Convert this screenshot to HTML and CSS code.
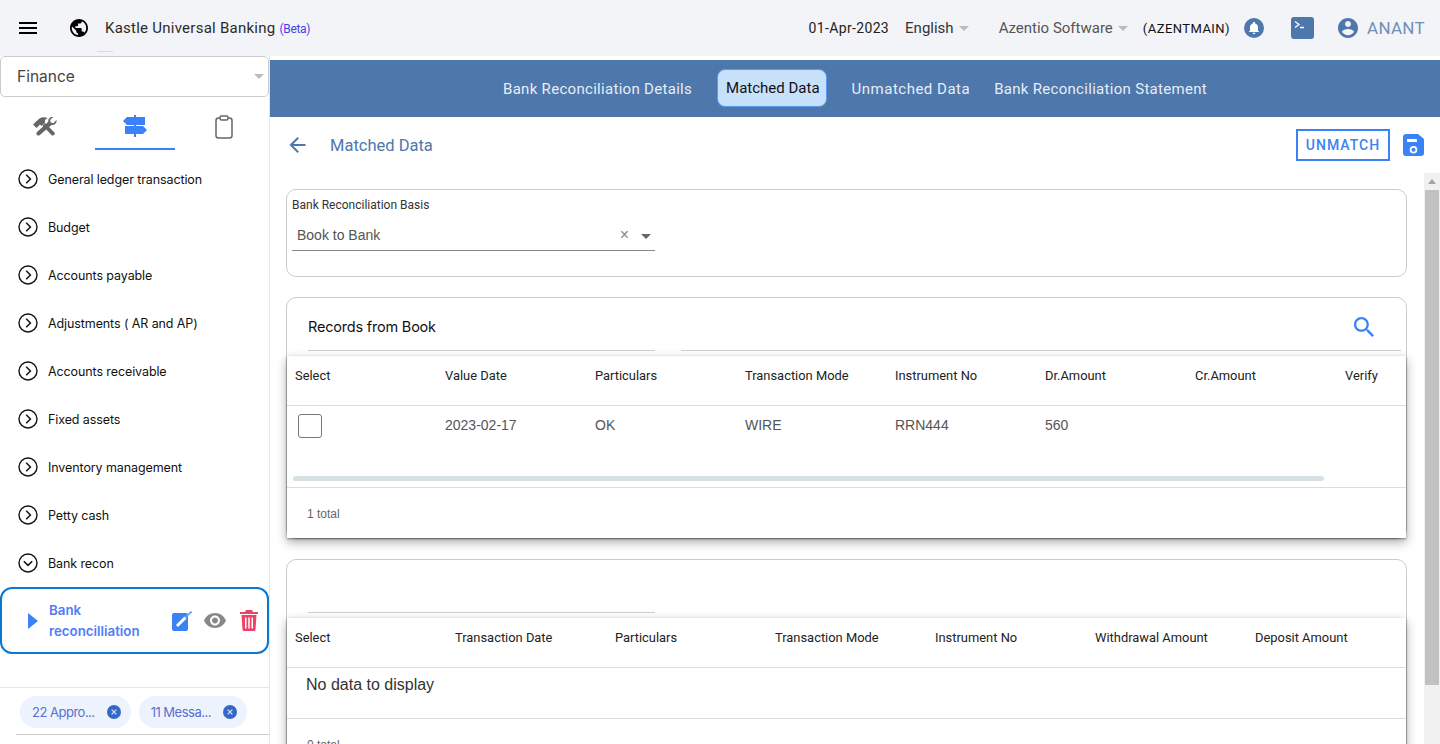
FILE: index.html
```html
<!DOCTYPE html>
<html lang="en">
<head>
  <meta charset="UTF-8" />
  <title>Kastle Universal Banking</title>
  <link rel="stylesheet" href="styles.css">
</head>
<body>

  <svg class="defs" width="0" height="0">
    <symbol id="cancel" viewBox="0 0 24 24"><circle cx="12" cy="12" r="12"/><path d="M8 8l8 8M16 8l-8 8" stroke="#fff" stroke-width="2.200" opacity="0.800"/></symbol>
    <symbol id="chevRight" viewBox="0 0 20 20"><circle cx="10" cy="10" r="9" fill="none" stroke="currentColor" stroke-width="1.400"/><path d="M8.200 5.800l4.200 4.200-4.200 4.200" fill="none" stroke="currentColor" stroke-width="1.500"/></symbol>
    <symbol id="chevDown" viewBox="0 0 20 20"><circle cx="10" cy="10" r="9" fill="none" stroke="currentColor" stroke-width="1.400"/><path d="M5.800 8.200l4.200 4.200 4.200-4.200" fill="none" stroke="currentColor" stroke-width="1.500"/></symbol>
  </svg>

  <header class="topbar">
    <svg class="ic-menu" viewBox="0 0 18 12"><path d="M0 0h18v2H0zM0 5h18v2H0zM0 10h18v2H0z"/></svg>
    <svg class="ic-globe" viewBox="2 2 20 20"><path d="M12 2C6.480 2 2 6.480 2 12s4.480 10 10 10 10-4.480 10-10S17.520 2 12 2zm-1 17.930c-3.950-.49-7-3.850-7-7.930 0-.62.08-1.210.21-1.790L9 15v1c0 1.100.9 2 2 2v1.930zm6.900-2.540c-.26-.81-1-1.390-1.900-1.390h-1v-3c0-.55-.45-1-1-1H8v-2h2c.55 0 1-.45 1-1V7h2c1.100 0 2-.9 2-2v-.41c2.930 1.190 5 4.060 5 7.410 0 2.080-.8 3.970-2.100 5.390z"/></svg>
    <div class="brand">Kastle Universal Banking <small>(Beta)</small></div>
    <div class="top-right">
      <span class="date">01-Apr-2023</span>
      <span class="drop lang">English<i class="caret"></i></span>
      <span class="drop org">Azentio Software<i class="caret"></i></span>
      <span class="code">(AZENTMAIN)</span>
      <svg class="ic-bell" viewBox="0 0 20 20"><circle cx="10" cy="10" r="10" fill="#4e77ab"/><path fill="#fff" d="M10 16c.8 0 1.400-.6 1.400-1.300H8.600c0 .7.6 1.300 1.400 1.300zm4-3.600V9.300c0-1.900-1-3.500-2.900-3.900V5c0-.6-.5-1-1.100-1s-1.100.4-1.100 1v.4C7 5.800 6 7.400 6 9.300v3.100L5 13.500v.4h10v-.4z"/></svg>
      <svg class="ic-term" viewBox="0 0 23 22"><rect width="23" height="22" rx="3" fill="#4e77ab"/><path d="M4 4.500l4 3-4 3M9 10.500h4" fill="none" stroke="#fff" stroke-width="1.300"/></svg>
      <svg class="ic-user" viewBox="2 2 20 20"><path d="M12 2C6.480 2 2 6.480 2 12s4.480 10 10 10 10-4.480 10-10S17.520 2 12 2zm0 3c1.660 0 3 1.340 3 3s-1.340 3-3 3-3-1.340-3-3 1.340-3 3-3zm0 14.200c-2.500 0-4.710-1.280-6-3.220.03-1.990 4-3.080 6-3.080 1.990 0 5.970 1.090 6 3.080-1.290 1.940-3.500 3.220-6 3.220z"/></svg>
      <span class="user">ANANT</span>
    </div>
  </header>

  <div class="page">
    <aside class="sidebar">
      <div class="module-select">Finance<i class="caret"></i></div>
      <div class="side-tabs">
        <div class="side-tab first">
          <svg class="ic-tools" viewBox="0 0 24 19"><path d="M0 7.500L6.500 1.500C9 0 12 0 14.500 1L12 3v2.500L8.500 9 7 7.500 3.500 11z"/><path d="M9.500 8.500l2.500-2.500 9.500 9.500c1.200 1.800-1 3.800-2.800 2.800z"/><path d="M23.500 3l-3.200 3.200-2.600-.6-.6-2.500L20.300 0c-3-.7-5.600 1.800-5 4.800L4 15c-1.900 2 .8 4.900 2.900 3L18.500 8c3 .7 5.800-2 5-5z"/></svg>
        </div>
        <div class="side-tab active">
          <svg class="ic-signs" viewBox="0 0 24 22"><path d="M11 0h2v2h9v8H4L0 6l4-4h7z"/><path d="M11 10h2v1h7l4 4-4 4h-7v3h-2v-3H2v-8h9z"/></svg>
        </div>
        <div class="side-tab">
          <svg class="ic-clip" viewBox="0 0 18 24"><rect x="1" y="3" width="16" height="20" rx="2.500" fill="none" stroke="currentColor" stroke-width="1.500"/><rect x="5" y="1" width="8" height="4" rx="1.500" fill="#fff" stroke="currentColor" stroke-width="1.500"/></svg>
        </div>
      </div>

      <ul class="tree">
        <li><svg><use href="#chevRight"/></svg>General ledger transaction</li>
        <li><svg><use href="#chevRight"/></svg>Budget</li>
        <li><svg><use href="#chevRight"/></svg>Accounts payable</li>
        <li><svg><use href="#chevRight"/></svg>Adjustments ( AR and AP)</li>
        <li><svg><use href="#chevRight"/></svg>Accounts receivable</li>
        <li><svg><use href="#chevRight"/></svg>Fixed assets</li>
        <li><svg><use href="#chevRight"/></svg>Inventory management</li>
        <li><svg><use href="#chevRight"/></svg>Petty cash</li>
        <li><svg><use href="#chevDown"/></svg>Bank recon</li>
      </ul>

      <div class="tree-active">
        <i class="play"></i>
        <span class="tree-active-name">Bank reconcilliation</span>
        <svg class="ic-edit" viewBox="0 0 20 20"><rect y="2" width="16" height="18" rx="2" fill="#3b82f6"/><path d="M5 15l8.500-8.500" stroke="#fff" stroke-width="3" fill="none"/><path d="M14 6l5.500-5.500" stroke="#6ea4f8" stroke-width="1.800" fill="none"/></svg>
        <svg class="ic-eye" viewBox="1 4.500 22 15"><path d="M12 4.500C7 4.500 2.730 7.610 1 12c1.730 4.390 6 7.500 11 7.500s9.270-3.110 11-7.500c-1.730-4.390-6-7.500-11-7.500zM12 17c-2.760 0-5-2.240-5-5s2.240-5 5-5 5 2.240 5 5-2.240 5-5 5zm0-8c-1.660 0-3 1.340-3 3s1.340 3 3 3 3-1.340 3-3-1.340-3-3-3z"/></svg>
        <svg class="ic-trash" viewBox="0 0 18 21"><path d="M6 0h6l1 2h5v2H0V2h5zM1.500 5h15l-1 14.500A1.500 1.500 0 0 1 14 21H4a1.500 1.500 0 0 1-1.500-1.500zM5 7.500V18.500h1.500V7.500zm3.250 0V18.500h1.500V7.500zm3.250 0V18.500H13V7.500z" fill-rule="evenodd"/></svg>
      </div>

      <div class="side-foot">
        <span class="chip">22 Appro...<svg><use href="#cancel"/></svg></span>
        <span class="chip">11 Messa...<svg><use href="#cancel"/></svg></span>
      </div>
    </aside>

    <main class="main">
      <nav class="tabs">
        <a class="tab">Bank Reconciliation Details</a>
        <a class="tab selected">Matched Data</a>
        <a class="tab">Unmatched Data</a>
        <a class="tab">Bank Reconciliation Statement</a>
      </nav>

      <div class="title-row">
        <svg class="ic-back" viewBox="4 4 16 16"><path d="M20 11H7.830l5.590-5.590L12 4l-8 8 8 8 1.410-1.410L7.830 13H20v-2z"/></svg>
        <h1>Matched Data</h1>
        <button class="btn-outline">UNMATCH</button>
        <svg class="ic-save" viewBox="0 0 21 22"><path fill-rule="evenodd" d="M3 0h12l6 5v14a3 3 0 0 1-3 3H3a3 3 0 0 1-3-3V3a3 3 0 0 1 3-3zm1 5v3h10V5zm6.500 7a3.800 3.800 0 1 0 0 7.600 3.800 3.800 0 0 0 0-7.600zm0 1.800a2 2 0 1 1 0 4 2 2 0 0 1 0-4z"/></svg>
      </div>

      <div class="scroll-wrap">
        <div class="content">
          <section class="card card-basis">
            <label>Bank Reconciliation Basis</label>
            <div class="field">
              <span>Book to Bank</span>
              <em>&times;</em>
              <i class="caret dark"></i>
            </div>
          </section>

          <section class="card card-table">
            <div class="card-head">
              <h2>Records from Book</h2>
              <div class="search-line">
                <svg class="ic-search" viewBox="3 3 17.500 17.500"><path d="M15.500 14h-.79l-.28-.27C15.410 12.590 16 11.110 16 9.500 16 5.910 13.090 3 9.500 3S3 5.910 3 9.500 5.910 16 9.500 16c1.610 0 3.090-.59 4.230-1.570l.27.28v.79l5 4.990L20.490 19l-4.990-5zm-6 0C7.010 14 5 11.990 5 9.500S7.010 5 9.500 5 14 7.010 14 9.500 11.990 14 9.500 14z"/></svg>
              </div>
            </div>
            <div class="paper">
              <table class="cols-150">
                <thead>
                  <tr><th>Select</th><th>Value Date</th><th>Particulars</th><th>Transaction Mode</th><th>Instrument No</th><th>Dr.Amount</th><th>Cr.Amount</th><th>Verify</th></tr>
                </thead>
                <tbody>
                  <tr><td><span class="check"></span></td><td>2023-02-17</td><td>OK</td><td>WIRE</td><td>RRN444</td><td>560</td><td></td><td></td></tr>
                </tbody>
              </table>
              <div class="hscroll"><div></div></div>
              <div class="total">1 total</div>
            </div>
          </section>

          <section class="card card-table second">
            <div class="card-head">
              <h2>&nbsp;</h2>
            </div>
            <div class="paper">
              <table class="cols-160">
                <thead>
                  <tr><th>Select</th><th>Transaction Date</th><th>Particulars</th><th>Transaction Mode</th><th>Instrument No</th><th>Withdrawal Amount</th><th>Deposit Amount</th></tr>
                </thead>
              </table>
              <div class="no-data">No data to display</div>
              <div class="total">0 total</div>
            </div>
          </section>
        </div>

        <div class="vscroll">
          <i class="arrow-up"></i>
          <div class="thumb"></div>
        </div>
      </div>
    </main>
  </div>

</body>
</html>
```

FILE: styles.css
```css
html, body {
  margin: 0;
  padding: 0;
  height: 744px;
  overflow: hidden;
}
body {
  font-family: Roboto, Arial, sans-serif;
  background-color: #fff;
  color: #222;
}
.defs {
  position: absolute;
}
.caret {
  display: inline-block;
  width: 0;
  height: 0;
  border-left: 5px solid transparent;
  border-right: 5px solid transparent;
  border-top: 5px solid #bbb;
}

/* top bar */
.topbar {
  height: 56px;
  background-color: #f3f4f8;
  display: flex;
  align-items: center;
  padding-left: 19px;
  position: relative;
}
.topbar::after {
  content: "";
  position: absolute;
  left: 97px;
  top: 51px;
  width: 16px;
  height: 1px;
  background-color: #ddd;
}
.ic-menu {
  width: 18px;
  height: 12px;
  margin-right: 33px;
}
.ic-globe {
  width: 18px;
  height: 18px;
  margin-right: 17px;
}
.brand {
  font-size: 15px;
  letter-spacing: 0.25px;
  color: #2b2b2b;
}
.brand small {
  font-size: 12px;
  letter-spacing: -0.3px;
  color: #3f3ff0;
}
.top-right {
  margin-left: auto;
  display: flex;
  align-items: center;
  font-size: 14px;
}
.date {
  color: #222;
  letter-spacing: 0.35px;
  margin-right: 16px;
}
.drop {
  color: #555;
  font-size: 15px;
}
.drop .caret {
  margin-left: 5px;
  vertical-align: 2px;
}
.lang {
  color: #333;
  margin-right: 30px;
}
.org {
  margin-right: 15px;
}
.code {
  font-size: 13px;
  letter-spacing: 0.45px;
  color: #111;
  margin-right: 14px;
}
.ic-bell {
  width: 20px;
  height: 20px;
  margin-right: 27px;
}
.ic-term {
  width: 23px;
  height: 22px;
  margin-right: 24px;
}
.ic-user {
  width: 20px;
  height: 20px;
  fill: #4e77ab;
  margin-right: 9px;
}
.user {
  font-size: 17px;
  letter-spacing: 0.3px;
  color: #6f8fb8;
  margin-right: 15px;
}

.page {
  display: flex;
  height: 688px;
}

/* sidebar */
.sidebar {
  width: 269px;
  flex: none;
  border-right: 1px solid #e6e6e6;
  display: flex;
  flex-direction: column;
  font-family: Inter, Arial, sans-serif;
}
.module-select {
  height: 39px;
  border: 1px solid #ccc;
  border-radius: 5px;
  padding-left: 16px;
  display: flex;
  align-items: center;
  justify-content: space-between;
  font-size: 15.500px;
  color: #444;
}
.module-select .caret {
  margin-right: 4px;
}
.side-tabs {
  display: flex;
  height: 53px;
  padding-left: 15px;
}
.side-tab {
  width: 80px;
  height: 53px;
  display: flex;
  justify-content: center;
  padding-top: 18px;
  box-sizing: border-box;
  color: #666;
  fill: #666;
}
.side-tab.first {
  padding: 20px 20px 0 0;
}
.side-tab.active {
  border-bottom: 2px solid #3b82f6;
  fill: #3b82f6;
}
.side-tab:last-child {
  margin-left: 9px;
}
.ic-tools {
  width: 24px;
  height: 19px;
}
.ic-signs {
  width: 24px;
  height: 22px;
}
.ic-clip {
  width: 18px;
  height: 24px;
}
.tree {
  list-style: none;
  margin: 5px 0 0;
  padding: 0;
}
.tree li {
  height: 48px;
  display: flex;
  align-items: center;
  padding-left: 18px;
  font-size: 12.500px;
  letter-spacing: -0.1px;
  color: #111;
}
.tree svg {
  width: 20px;
  height: 20px;
  margin-right: 10px;
}
.tree-active {
  height: 63px;
  border: 2px solid #0a78d0;
  border-radius: 12px;
  display: flex;
  align-items: center;
  padding-left: 26px;
  color: #4f7df7;
}
.play {
  width: 0;
  height: 0;
  border-top: 8px solid transparent;
  border-bottom: 8px solid transparent;
  border-left: 10px solid #3b82f6;
  margin-right: 11px;
}
.tree-active-name {
  width: 115px;
  font-size: 13.300px;
  font-weight: 600;
  line-height: 21px;
  margin-right: 8px;
}
.ic-edit {
  width: 20px;
  height: 20px;
  margin-right: 12px;
}
.ic-eye {
  width: 22px;
  height: 15px;
  fill: #888;
  margin-right: 14px;
}
.ic-trash {
  width: 18px;
  height: 21px;
  fill: #ee4266;
}
.side-foot {
  margin-top: auto;
  height: 48px;
  margin-bottom: 9px;
  border-top: 1px solid #e6e6e6;
  border-bottom: 1px solid #ccc;
  display: flex;
  gap: 8px;
  padding: 8px 0 0 20px;
  box-sizing: border-box;
  position: relative;
}
.side-foot::after {
  content: "";
  position: absolute;
  left: 0;
  bottom: -1px;
  width: 16px;
  height: 1px;
  background-color: #fff;
}
.chip {
  height: 32px;
  border-radius: 16px;
  background-color: #edf3fc;
  color: #5a6fd0;
  font-size: 13px;
  letter-spacing: -0.5px;
  display: flex;
  align-items: center;
  padding: 0 10px 0 12px;
  box-sizing: border-box;
}
.chip svg {
  width: 14px;
  height: 14px;
  fill: #3468c8;
  margin-left: 12px;
}

/* main */
.main {
  flex: 1;
  min-width: 0;
  display: flex;
  flex-direction: column;
}
.tabs {
  margin-top: 4px;
  height: 57px;
  flex: none;
  background-color: #4e77ab;
  display: flex;
  align-items: center;
  padding-left: 224px;
}
.tab {
  color: #e6edf6;
  font-size: 15px;
  letter-spacing: 0.3px;
  padding: 0 9px;
  margin-right: 6px;
  height: 38px;
  line-height: 38px;
  border-radius: 8px;
  white-space: nowrap;
}
.tab:nth-child(3) {
  letter-spacing: 0.5px;
}
.tab.selected {
  box-sizing: border-box;
  border: 1px solid #5a9bf0;
  line-height: 36px;
  padding: 0 6px 0 8px;
  background-color: #c8e1fb;
  color: #111;
  letter-spacing: 0;
  margin: 0 16px 2px 10px;
}
.title-row {
  height: 56px;
  flex: none;
  display: flex;
  align-items: center;
  padding-left: 19px;
}
.ic-back {
  width: 17px;
  height: 16px;
  fill: #4e77ab;
  margin-right: 24px;
}
.title-row h1 {
  margin: 0;
  font-size: 16.500px;
  font-weight: 400;
  color: #4e77ab;
}
.btn-outline {
  margin-left: auto;
  width: 94px;
  height: 32px;
  border: 2px solid #3b82f6;
  background-color: #fff;
  color: #3b82f6;
  font-family: Roboto, Arial, sans-serif;
  font-size: 14px;
  font-weight: 500;
  letter-spacing: 1px;
  padding: 0;
}
.ic-save {
  width: 21px;
  height: 22px;
  fill: #3b82f6;
  margin: 0 16px 0 13px;
}

/* scrolling body */
.scroll-wrap {
  flex: 1;
  min-height: 0;
  display: flex;
  overflow: hidden;
}
.content {
  flex: 1;
  min-width: 0;
  padding: 16px 17px 0 16px;
}
.vscroll {
  width: 16px;
  flex: none;
  background-color: #f1f1f1;
  display: flex;
  flex-direction: column;
  align-items: center;
}
.arrow-up {
  width: 0;
  height: 0;
  margin: 6px 0 6px;
  border-left: 4px solid transparent;
  border-right: 4px solid transparent;
  border-bottom: 5px solid #a3a3a3;
}
.thumb {
  width: 14px;
  height: 495px;
  background-color: #c1c1c1;
}

.card {
  border: 1px solid #ccc;
  border-radius: 10px;
  background-color: #fff;
}
.card-basis {
  height: 86px;
  margin-bottom: 20px;
}
.card-basis label {
  display: block;
  font-size: 12px;
  line-height: 14px;
  color: #333;
  padding: 8px 5px 0;
}
.field {
  width: 363px;
  height: 30px;
  margin: 9px 0 0 5px;
  box-sizing: border-box;
  border-bottom: 1px solid #888;
  display: flex;
  align-items: center;
  padding: 0 4px 2px 5px;
  font-family: "Liberation Sans", Arial, sans-serif;
  font-size: 14px;
  color: #555;
}
.field span {
  flex: 1;
}
.field em {
  font-style: normal;
  font-size: 16px;
  color: #888;
  margin-right: 11px;
}
.caret.dark {
  border-top-color: #666;
  margin: 3px 0 0 1px;
}
.card-table {
  margin-bottom: 20px;
}
.card-head {
  height: 53px;
  margin: 0 5px 0 21px;
  display: flex;
}
.card-head h2 {
  margin: 0;
  width: 347px;
  height: 53px;
  box-sizing: border-box;
  border-bottom: 1px solid #ccc;
  font-family: Inter, Arial, sans-serif;
  font-size: 14.500px;
  font-weight: 400;
  letter-spacing: -0.2px;
  line-height: 57px;
  color: #111;
}
.search-line {
  flex: 1;
  margin-left: 26px;
  height: 53px;
  box-sizing: border-box;
  border-bottom: 1px solid #ccc;
  display: flex;
  justify-content: flex-end;
  align-items: flex-start;
  padding: 19px 27px 0 0;
}
.ic-search {
  width: 20px;
  height: 20px;
  fill: #3b82f6;
}
.paper {
  margin-top: 5px;
  background-color: #fff;
  box-shadow: 0 4px 10px rgba(0, 0, 0, 0.35), 0 1px 2px rgba(0, 0, 0, 0.4);
  overflow: hidden;
}
table {
  border-collapse: collapse;
  table-layout: fixed;
}
.cols-150 {
  width: 1200px;
}
.cols-160 {
  width: 1120px;
}
th {
  height: 49px;
  box-sizing: border-box;
  padding: 0 0 10px 8px;
  border-bottom: 1px solid #ddd;
  text-align: left;
  font-size: 12.900px;
  font-weight: 400;
  color: #222;
  white-space: nowrap;
}
.cols-160 th {
  height: 50px;
}
td {
  height: 38px;
  padding: 0 0 2px 8px;
  font-family: "Liberation Sans", Arial, sans-serif;
  font-size: 14px;
  color: #555;
}
.check {
  display: block;
  width: 24px;
  height: 24px;
  box-sizing: border-box;
  margin: 2px 0 0 3px;
  border: 1px solid #777;
  border-radius: 3px;
}
.hscroll {
  height: 42px;
  box-sizing: border-box;
  padding: 30px 0 0 6px;
  border-bottom: 1px solid #ddd;
}
.hscroll div {
  width: 1031px;
  height: 5px;
  border-radius: 3px;
  background-color: #d7e0e4;
}
.total {
  height: 50px;
  padding: 19px 0 0 20px;
  box-sizing: border-box;
  font-family: "Liberation Sans", Arial, sans-serif;
  font-size: 12px;
  color: #666;
}
.no-data {
  height: 51px;
  box-sizing: border-box;
  padding: 8px 0 0 19px;
  border-bottom: 1px solid #ddd;
  font-family: "Liberation Sans", Arial, sans-serif;
  font-size: 16px;
  color: #333;
}
```
